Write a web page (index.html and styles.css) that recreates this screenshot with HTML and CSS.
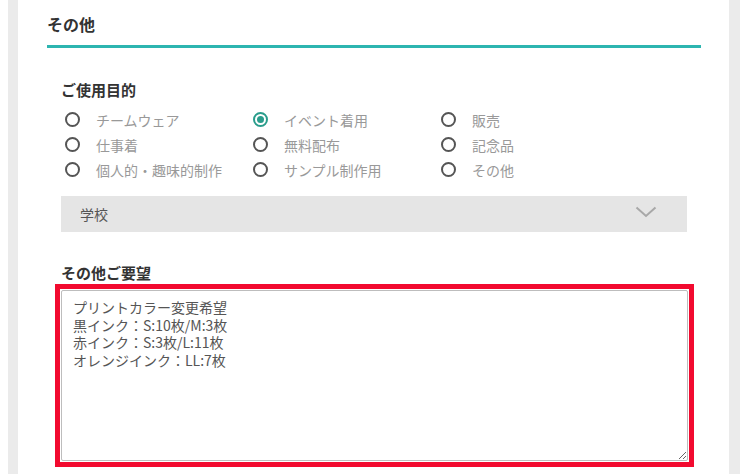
FILE: index.html
```html
<!DOCTYPE html>
<html lang="ja">
<head>
<meta charset="utf-8">
<link rel="stylesheet" href="styles.css">
</head>
<body>
<div class="frame">
  <div class="card">
    <h2 class="section-title">その他</h2>
    <div class="content">
      <div class="field-label first">ご使用目的</div>
      <div class="radio-grid">
        <label class="radio"><span class="dot"></span><span class="txt">チームウェア</span></label>
        <label class="radio"><span class="dot checked"></span><span class="txt">イベント着用</span></label>
        <label class="radio"><span class="dot"></span><span class="txt">販売</span></label>
        <label class="radio"><span class="dot"></span><span class="txt">仕事着</span></label>
        <label class="radio"><span class="dot"></span><span class="txt">無料配布</span></label>
        <label class="radio"><span class="dot"></span><span class="txt">記念品</span></label>
        <label class="radio"><span class="dot"></span><span class="txt">個人的・趣味的制作</span></label>
        <label class="radio"><span class="dot"></span><span class="txt">サンプル制作用</span></label>
        <label class="radio"><span class="dot"></span><span class="txt">その他</span></label>
      </div>
      <div class="select">
        <span class="select-text">学校</span>
        <svg class="chev" width="22" height="12" viewBox="0 0 22 12"><path d="M1.5 1.5 L11 10 L20.5 1.5" fill="none" stroke="#a8a8a8" stroke-width="2"/></svg>
      </div>
      <div class="field-label second">その他ご要望</div>
      <div class="highlight">
        <textarea class="note">プリントカラー変更希望
黒インク：S:10枚/M:3枚
赤インク：S:3枚/L:11枚
オレンジインク：LL:7枚</textarea>
      </div>
    </div>
  </div>
</div>
</body>
</html>
```
FILE: styles.css
```css
html, body {
  margin: 0;
  padding: 0;
  background: #ffffff;
  height: 100%;
  overflow: hidden;
}
body {
  font-family: "Noto Sans CJK JP", "Noto Sans", sans-serif;
}
.frame {
  margin-left: 8px;
  width: 711px;
  padding: 0 11px 0 10px;
  background: #ebebeb;
  height: 474px;
}
.card {
  background: #ffffff;
  height: 474px;
  padding: 12px 28px 0 29px;
  box-sizing: border-box;
}
.section-title {
  margin: 0;
  font-size: 16px;
  line-height: 24px;
  font-weight: 700;
  color: #333333;
  padding-bottom: 9px;
  border-bottom: 3px solid #2db5b0;
}
.content {
  padding: 0 14px;
}
.field-label {
  font-size: 15px;
  line-height: 20px;
  font-weight: 700;
  color: #333333;
}
.field-label.first {
  margin-top: 32px;
}
.field-label.second {
  margin-top: 31px;
}
.radio-grid {
  margin-top: 7px;
  display: grid;
  grid-template-columns: 188px 188px 1fr;
  padding-left: 4px;
}
.radio {
  display: flex;
  align-items: center;
  height: 25px;
}
.dot {
  width: 15px;
  height: 15px;
  box-sizing: border-box;
  border: 2px solid #555555;
  border-radius: 50%;
  flex: none;
  display: flex;
  align-items: center;
  justify-content: center;
}
.dot.checked {
  border-color: #2a9d8c;
}
.dot.checked::after {
  content: "";
  width: 7px;
  height: 7px;
  border-radius: 50%;
  background: #2a9d8c;
}
.txt {
  margin-left: 16px;
  font-size: 14px;
  color: #999999;
}
.select {
  margin-top: 14px;
  height: 36px;
  background: #e5e5e5;
  display: flex;
  align-items: center;
  justify-content: space-between;
  padding: 0 30px 0 19px;
}
.select-text {
  font-size: 14px;
  color: #555555;
}
.chev {
  display: block;
  margin-top: -4px;
}
.highlight {
  margin: 1px 0 0 -6px;
  border: 5px solid #f20a2f;
  padding: 1px 0 1px 1px;
  width: 628px;
}
.note {
  display: block;
  width: 627px;
  height: 171px;
  box-sizing: border-box;
  margin: 0;
  border: 1px solid #bdbdbd;
  border-radius: 2px;
  padding: 8px 11px;
  font-family: "Noto Sans CJK JP", "Noto Sans", sans-serif;
  font-size: 14px;
  line-height: 17.5px;
  color: #555555;
  background: #ffffff;
  resize: both;
  outline: none;
}
```
